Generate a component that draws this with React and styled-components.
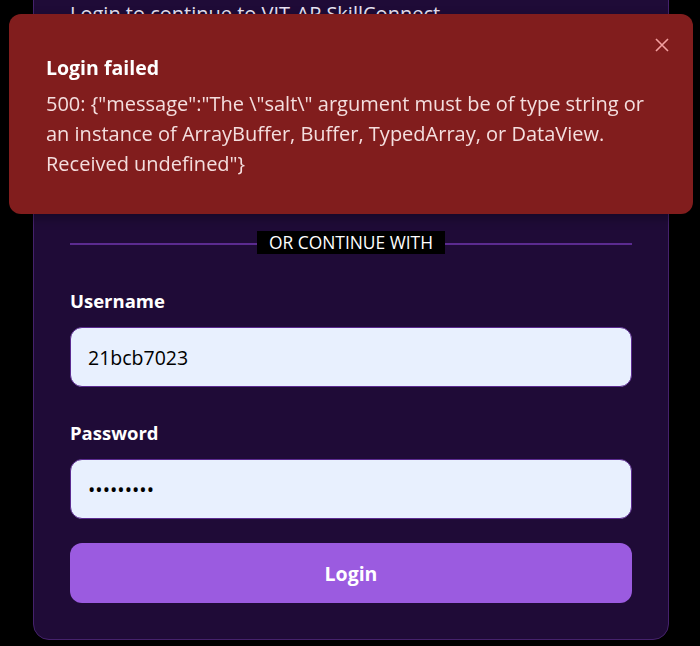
import React, { useEffect, useState } from 'react';
import styled, { createGlobalStyle } from 'styled-components';

const GlobalStyle = createGlobalStyle`
  html, body {
    margin: 0;
    padding: 0;
    background: #000;
    font-family: 'Open Sans', 'Lato', sans-serif;
  }
  * { box-sizing: border-box; }
`;

const App = () => {
  const [showToast, setShowToast] = useState(true);
  const [username, setUsername] = useState('21bcb7023');
  const [password, setPassword] = useState('123456789');

  useEffect(() => {
    window.scrollTo(0, document.body.scrollHeight);
  }, []);

  return (
    <>
      <GlobalStyle />
      <Page>
        <Card>
          <Title>Welcome Back</Title>
          <Subtitle>Login to continue to VIT-AP SkillConnect</Subtitle>
          <GoogleButton type='button'>Continue with Google</GoogleButton>
          <Divider>
            <DividerLabel>OR CONTINUE WITH</DividerLabel>
          </Divider>
          <Form onSubmit={(e) => e.preventDefault()}>
            <Field>
              <Label htmlFor='username'>Username</Label>
              <Input
                id='username'
                value={username}
                onChange={(e) => setUsername(e.target.value)}
              />
            </Field>
            <Field>
              <Label htmlFor='password'>Password</Label>
              <Input
                id='password'
                type='password'
                value={password}
                onChange={(e) => setPassword(e.target.value)}
              />
            </Field>
            <SubmitButton type='submit'>Login</SubmitButton>
          </Form>
        </Card>
      </Page>
      {showToast && (
        <Toast>
          <CloseButton onClick={() => setShowToast(false)} aria-label='Close'>
            <svg width='14' height='14' viewBox='0 0 14 14'>
              <path d='M1 1 L13 13 M13 1 L1 13' stroke='currentColor' strokeWidth='1.6' />
            </svg>
          </CloseButton>
          <ToastTitle>Login failed</ToastTitle>
          <ToastMessage>
            500: {'{"message":"The \\"salt\\" argument must be of type string or an instance of ArrayBuffer, Buffer, TypedArray, or DataView. Received undefined"}'}
          </ToastMessage>
        </Toast>
      )}
    </>
  );
};

export default App;

const Page = styled.div`
  display: flex;
  justify-content: center;
  padding: 40px 31px 6px 33px;
`;

const Card = styled.div`
  width: 100%;
  background: #1f0b37;
  border: 1px solid #45226c;
  border-radius: 16px;
  padding: 36px;
  display: flex;
  flex-direction: column;
`;

const Title = styled.h1`
  margin: 0 0 8px;
  color: #fff;
  font-size: 30px;
`;

const Subtitle = styled.p`
  margin: 0;
  color: #e9e3f2;
  font-size: 20px;
  line-height: 30px;
`;

const GoogleButton = styled.button`
  margin: 68px 0 0;
  height: 60px;
  border-radius: 12px;
  border: 1px solid #4b2475;
  background: #fff;
  color: #222;
  font-family: inherit;
  font-size: 18px;
  font-weight: 700;
`;

const Divider = styled.div`
  margin: 74px 0 0;
  display: flex;
  align-items: center;
  justify-content: center;
  position: relative;
  height: 23px;
  &::before {
    content: '';
    position: absolute;
    left: 0;
    right: 0;
    top: 50%;
    border-top: 2px solid #5b2b90;
  }
`;

const DividerLabel = styled.span`
  position: relative;
  background: #000;
  color: #fff;
  font-size: 17.4px;
  line-height: 23px;
  padding: 0 12px;
`;

const Form = styled.form`
  display: flex;
  flex-direction: column;
  margin-top: 33px;
`;

const Field = styled.div`
  display: flex;
  flex-direction: column;
  margin-bottom: 32px;
  &:nth-of-type(2) {
    margin-bottom: 24px;
  }
`;

const Label = styled.label`
  color: #fff;
  font-size: 18.5px;
  font-weight: 700;
  line-height: 27px;
  margin-bottom: 13px;
`;

const Input = styled.input`
  height: 60px;
  border-radius: 12px;
  border: 1px solid #5b2b90;
  background: #e8f0fe;
  color: #000;
  font-family: inherit;
  font-size: 19.5px;
  padding: 0 17px;
  outline: none;
`;

const SubmitButton = styled.button`
  height: 60px;
  border: none;
  border-radius: 12px;
  background: #9b5be0;
  color: #fff;
  font-family: inherit;
  font-size: 19.5px;
  font-weight: 700;
  cursor: pointer;
`;

const Toast = styled.div`
  position: fixed;
  top: 14px;
  left: 9px;
  right: 7px;
  height: 200px;
  background: #811d1d;
  border-radius: 12px;
  padding: 41px 36px 0 37px;
  box-shadow: 0 4px 12px rgba(0, 0, 0, 0.3);
`;

const CloseButton = styled.button`
  position: absolute;
  top: 24px;
  right: 24px;
  background: transparent;
  border: none;
  color: #f3a0a0;
  padding: 0;
  width: 14px;
  height: 14px;
  cursor: pointer;
`;

const ToastTitle = styled.div`
  color: #fff;
  font-size: 19.5px;
  font-weight: 700;
  line-height: 26px;
  margin-bottom: 8px;
`;

const ToastMessage = styled.div`
  color: #f4dede;
  font-size: 20px;
  line-height: 30px;
`;
